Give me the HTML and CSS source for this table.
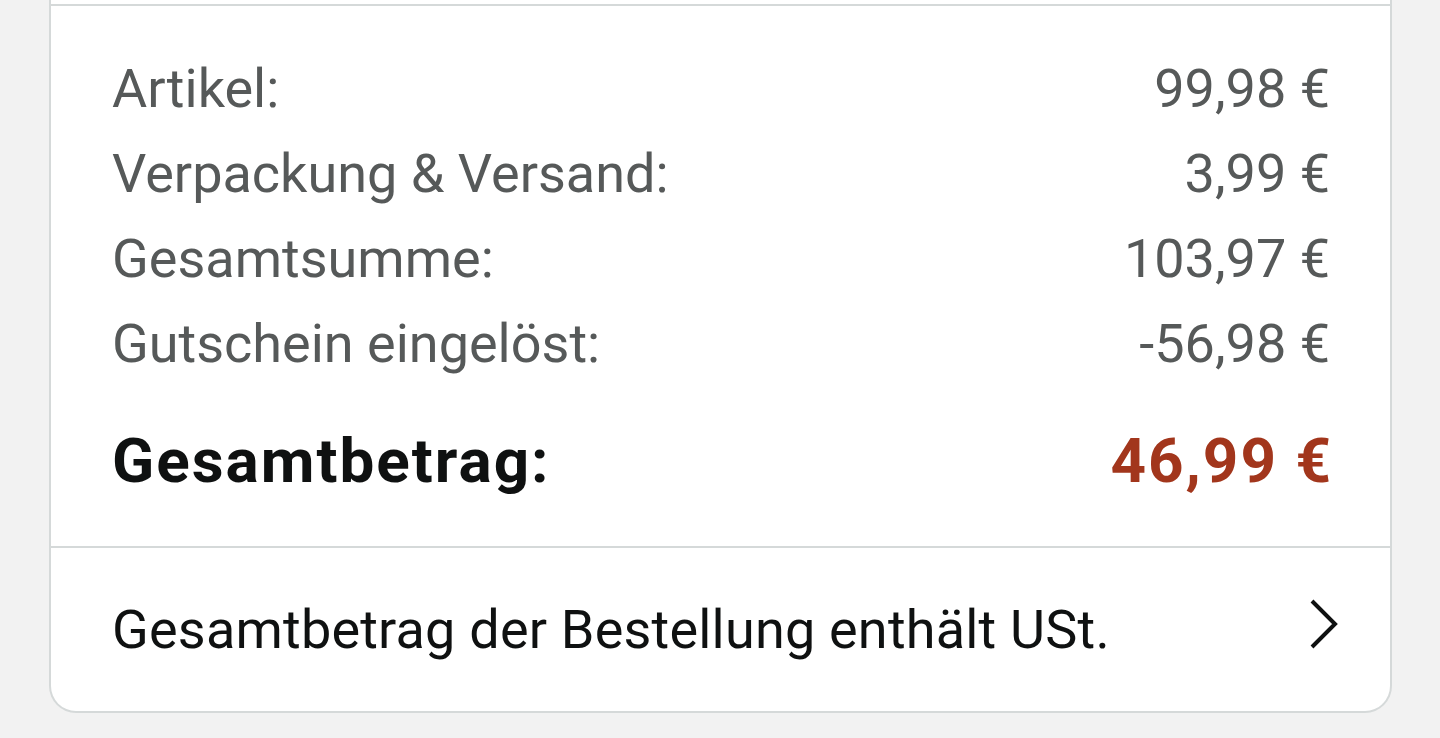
FILE: index.html
```html
<!DOCTYPE html>
<html lang="de">
<head>
  <meta charset="UTF-8">
  <meta name="viewport" content="width=device-width, initial-scale=1.0">
  <title>Bestellübersicht</title>
  <link rel="stylesheet" href="styles.css">
</head>
<body>
  <div class="page">
    <div class="card">
      <div class="card-top"></div>
      <div class="summary">
        <div class="row"><span>Artikel:</span><span>99,98 €</span></div>
        <div class="row"><span>Verpackung &amp; Versand:</span><span>3,99 €</span></div>
        <div class="row"><span>Gesamtsumme:</span><span>103,97 €</span></div>
        <div class="row"><span>Gutschein eingelöst:</span><span>-56,98 €</span></div>
        <div class="row total"><span>Gesamtbetrag:</span><span class="price">46,99 €</span></div>
      </div>
      <div class="tax-link">
        <span>Gesamtbetrag der Bestellung enthält USt.</span>
        <svg class="chevron" width="30" height="50" viewBox="0 0 30 50">
          <polyline points="3,2 26,25 3,48" fill="none" stroke="#0f1111" stroke-width="4"/>
        </svg>
      </div>
    </div>
  </div>
</body>
</html>
```

FILE: styles.css
```css
body {
  margin: 0;
  padding: 0;
  background-color: #f2f2f2;
  font-family: Roboto, "Noto Sans", sans-serif;
}
.page {
  padding: 0 48px 0 49px;
  height: 738px;
  overflow: hidden;
}
.card {
  background: white;
  border: 2px solid #d5d9d9;
  border-top: none;
  border-radius: 0 0 27px 27px;
}
.card-top {
  height: 4px;
  border-bottom: 2px solid #d5d9d9;
}
.summary {
  padding: 40px 60px 43px 61px;
  border-bottom: 2px solid #d5d9d9;
}
.row {
  display: flex;
  justify-content: space-between;
  font-size: 54px;
  line-height: 85px;
  color: #565959;
}
.row.total {
  margin-top: 32px;
  font-size: 62px;
  font-weight: bold;
  letter-spacing: 2px;
  color: #0f1111;
}
.price {
  margin-right: -3px;
  color: #a2361c;
}
.tax-link {
  display: flex;
  align-items: center;
  justify-content: space-between;
  height: 163px;
  padding: 0 51px 0 61px;
  font-size: 54px;
  letter-spacing: 0.2px;
  color: #0f1111;
}
.chevron {
  display: block;
  margin-bottom: 12px;
}
```
